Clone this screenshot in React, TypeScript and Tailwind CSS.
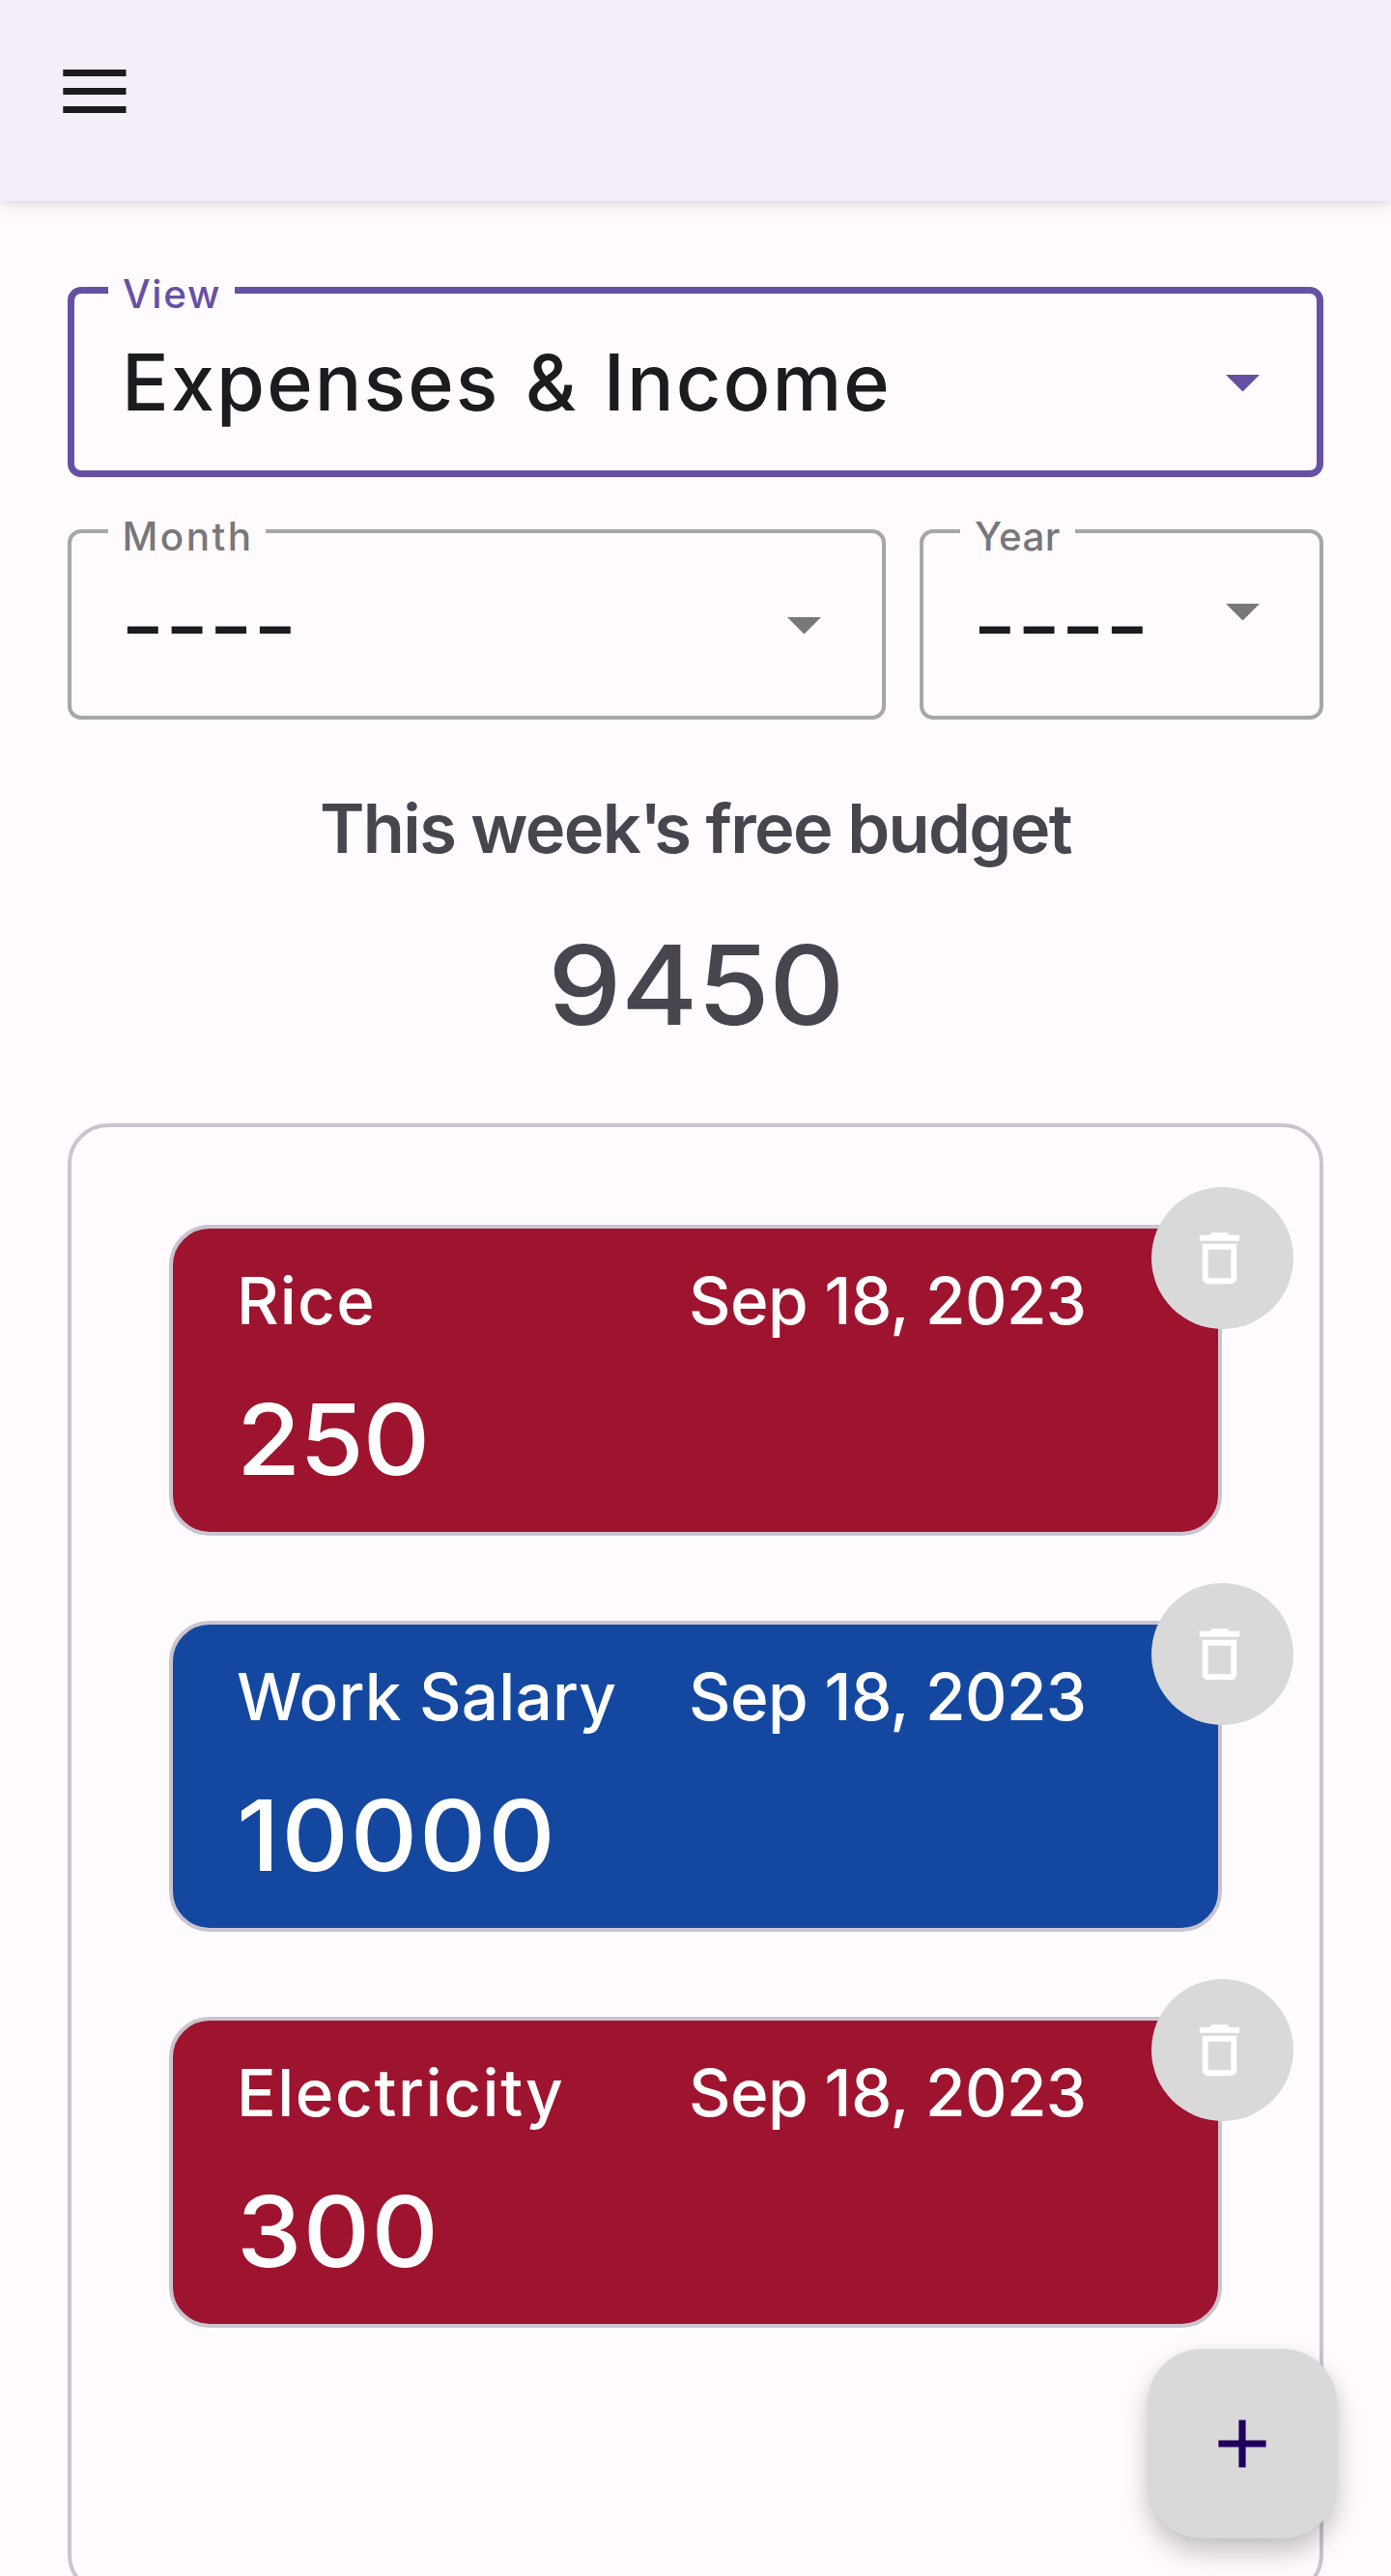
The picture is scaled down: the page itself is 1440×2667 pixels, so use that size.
import React from "react";

type Entry = {
  title: string;
  date: string;
  amount: string;
  titleClass: string;
  amountClass: string;
  cardClass: string;
};

const entries: Entry[] = [
  {
    title: "Rice",
    date: "Sep 18, 2023",
    amount: "250",
    titleClass: "tracking-[1.2px]",
    amountClass: "tracking-[-1px]",
    cardClass: "bg-[#9e142e]",
  },
  {
    title: "Work Salary",
    date: "Sep 18, 2023",
    amount: "10000",
    titleClass: "tracking-[0.25px]",
    amountClass: "tracking-[1.7px]",
    cardClass: "bg-[#1448a0]",
  },
  {
    title: "Electricity",
    date: "Sep 18, 2023",
    amount: "300",
    titleClass: "tracking-[1.6px]",
    amountClass: "tracking-[1.2px]",
    cardClass: "bg-[#9e142e]",
  },
];

function Caret({ className }: { className: string }) {
  return (
    <svg width="35" height="17.5" viewBox="0 0 10 5" fill="currentColor" className={className}>
      <path d="M0 0h10L5 5z" />
    </svg>
  );
}

function AppBar() {
  return (
    <header className="relative flex h-[208px] shrink-0 items-start bg-[#f3eef8] pt-[72px] pl-[65px] shadow-[0_3px_8px_rgba(0,0,0,0.08),0_7px_21px_rgba(0,0,0,0.07)]">
      <button aria-label="Menu" className="text-[#1c1b1f]">
        <svg width="66" height="45" viewBox="0 0 66 45" fill="currentColor">
          <path d="M0.3 0h65.2v7H0.3zM0.3 19h65.2v7H0.3zM0.3 38h65.2v7H0.3z" />
        </svg>
      </button>
    </header>
  );
}

function Trash() {
  return (
    <svg width="71" height="71" viewBox="0 0 24 24" fill="currentColor">
      <path d="M6 19c0 1.1.9 2 2 2h8c1.1 0 2-.9 2-2V7H6v12zM8 9h8v10H8V9zm7.5-5l-1-1h-5l-1 1H5v2h14V4h-3.5z" />
    </svg>
  );
}

function EntryCard({ entry }: { entry: Entry }) {
  return (
    <article
      className={`relative h-[322px] w-[1090px] rounded-[42px] border-4 border-[#cac4d0] pt-[35px] pl-[66px] font-medium whitespace-nowrap text-white ${entry.cardClass}`}
    >
      <div className="flex text-[67.4px] leading-[80px]">
        <span className={`w-[468px] ${entry.titleClass}`}>{entry.title}</span>
        <span className="tracking-[-0.55px]">{entry.date}</span>
      </div>
      <div
        className={`mt-[48px] w-fit origin-left scale-x-[1.06] text-[101.5px] leading-[110px] ${entry.amountClass}`}
      >
        {entry.amount}
      </div>
      <button
        aria-label="Delete"
        className="absolute -top-[43px] -right-[78px] flex size-[147px] items-center justify-center rounded-full bg-[#d9d9d9] pr-[7px] text-white"
      >
        <Trash />
      </button>
    </article>
  );
}

export default function App() {
  return (
    <div className="relative flex h-[2667px] w-[1440px] flex-col overflow-hidden bg-[#fffbff] font-['Inter',sans-serif]">
      <AppBar />
      <main className="flex flex-col px-[70px] pt-[89px]">
        <div className="relative flex h-[197px] items-center justify-between rounded-[14px] border-[7px] border-[#6750a4] pr-[59.5px] pl-[49px] text-[#6750a4]">
          <span className="absolute top-px left-[35px] w-[131px] -translate-y-1/2 bg-[#fffbff] pl-[15px] text-[40.4px] leading-[40px] font-medium tracking-[1.7px] whitespace-nowrap">
            View
          </span>
          <span className="text-[80.9px] leading-[100px] font-medium tracking-[2.1px] [word-spacing:2.5px] whitespace-nowrap text-[#1c1b1f]">
            Expenses &amp; Income
          </span>
          <Caret className="relative top-px" />
        </div>

        <div className="mt-[54px] flex gap-[35px]">
          <div className="relative flex h-[197px] w-[847px] items-center justify-between rounded-[14px] border-4 border-[#a8a6a9] pr-[63px] pl-[51px] text-[#79777a]">
            <span className="absolute top-[4px] left-[38px] w-[163px] -translate-y-1/2 bg-[#fffbff] pl-[14.5px] text-[40.4px] leading-[40px] font-medium tracking-[2.5px] whitespace-nowrap">
              Month
            </span>
            <span className="mt-[3px] origin-left scale-x-[1.22] text-[80.9px] leading-[100px] font-medium text-[#1c1b1f]">
              ----
            </span>
            <Caret className="relative top-px" />
          </div>
          <div className="relative flex h-[197px] flex-1 items-center justify-between rounded-[14px] border-4 border-[#a8a6a9] pr-[62.5px] pl-[51px] text-[#79777a]">
            <span className="absolute top-[4px] left-[38px] w-[119px] -translate-y-1/2 bg-[#fffbff] pl-[15px] text-[40.4px] leading-[40px] font-medium tracking-[0.4px] whitespace-nowrap">
              Year
            </span>
            <span className="mt-[3px] origin-left scale-x-[1.22] text-[80.9px] leading-[100px] font-medium text-[#1c1b1f]">
              ----
            </span>
            <Caret className="mb-[26px]" />
          </div>
        </div>

        <h1 className="mt-[73px] text-center text-[70.4px] leading-[80px] font-semibold tracking-[-1.6px] text-[#49454f]">
          This week<span className="tracking-[-8px]">'</span>s free budget
        </h1>
        <p className="mt-[62px] scale-x-[1.06] pl-[1px] text-center text-[114.2px] leading-[120px] font-[460] tracking-[-0.5px] text-[#49454f]">
          9450
        </p>

        <section className="mt-[83px] flex h-[1524px] shrink-0 flex-col gap-[88px] rounded-[42px] border-4 border-[#cac4d0] pt-[101px] pl-[101px]">
          {entries.map((entry) => (
            <EntryCard key={entry.title} entry={entry} />
          ))}
        </section>
      </main>

      <button
        aria-label="Add"
        className="absolute right-[56px] bottom-[39px] flex size-[196px] items-center justify-center rounded-[56px] bg-[#d9d9d9] text-[#21005d] shadow-[0_14px_28px_rgba(0,0,0,0.24),0_0_8px_rgba(0,0,0,0.03)]"
      >
        <svg width="50" height="50" viewBox="0 0 50 50" fill="currentColor">
          <path d="M21.4 0.4h7.2v21h21v7.2h-21v21h-7.2v-21h-21v-7.2h21z" />
        </svg>
      </button>
    </div>
  );
}
